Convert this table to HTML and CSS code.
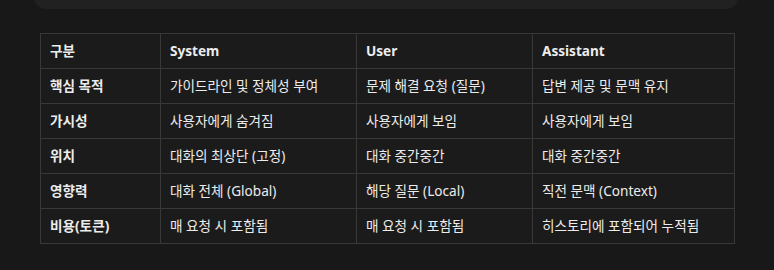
FILE: index.html
```html
<!DOCTYPE html>
<html lang="ko">
<head>
<meta charset="utf-8">
<link rel="stylesheet" href="styles.css">
</head>
<body>
<div class="card"></div>
<div class="wrap">
<table class="grid">
  <thead>
    <tr><th>구분</th><th>System</th><th>User</th><th>Assistant</th></tr>
  </thead>
  <tbody>
    <tr><td class="key">핵심 목적</td><td>가이드라인 및 정체성 부여</td><td>문제 해결 요청 (질문)</td><td>답변 제공 및 문맥 유지</td></tr>
    <tr><td class="key">가시성</td><td>사용자에게 숨겨짐</td><td>사용자에게 보임</td><td>사용자에게 보임</td></tr>
    <tr><td class="key">위치</td><td>대화의 최상단 (고정)</td><td>대화 중간중간</td><td>대화 중간중간</td></tr>
    <tr><td class="key">영향력</td><td>대화 전체 (Global)</td><td>해당 질문 (Local)</td><td>직전 문맥 (Context)</td></tr>
    <tr><td class="key">비용(토큰)</td><td>매 요청 시 포함됨</td><td>매 요청 시 포함됨</td><td>히스토리에 포함되어 누적됨</td></tr>
  </tbody>
</table>
</div>
</body>
</html>
```
FILE: styles.css
```css
html, body {
  margin: 0;
  padding: 0;
  background: #181818;
  font-family: "Noto Sans", "Noto Sans CJK KR", sans-serif;
  color: #ececec;
}
.card {
  margin: -20px 36px 0 34px;
  height: 29px;
  background: #212121;
  border-radius: 0 0 12px 12px;
}
.wrap {
  padding: 24px 0 0 40px;
}
.grid {
  border-collapse: collapse;
  background: #1b1b1b;
  font-size: 13.6px;
  table-layout: fixed;
}
.grid th, .grid td {
  border: 1px solid #383838;
  height: 34px;
  padding: 0 9px;
  text-align: left;
  vertical-align: middle;
  white-space: nowrap;
  line-height: 16px;
}
.grid th { font-weight: 700; }
.grid td.key { font-weight: 700; }
.grid th:nth-child(1) { width: 101px; }
.grid th:nth-child(2) { width: 177px; }
.grid th:nth-child(3) { width: 157px; }
.grid th:nth-child(4) { width: 183px; }
```
